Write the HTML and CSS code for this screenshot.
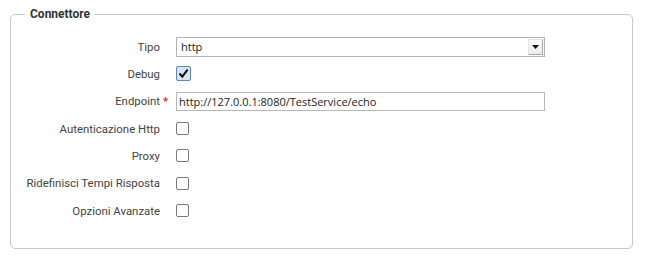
FILE: index.html
```html
<!DOCTYPE html>
<html>
<head>
<meta charset="utf-8">
<link rel="stylesheet" href="styles.css">
</head>
<body>
<fieldset class="box">
  <legend class="box-title">Connettore</legend>
  <div class="form">
    <div class="label">Tipo</div>
    <div class="field">
      <div class="select">
        <span class="select-text">http</span>
        <span class="select-btn"><svg width="7" height="4" viewBox="0 0 7 4"><path d="M0 0H7L3.5 4Z" fill="#111"/></svg></span>
      </div>
    </div>

    <div class="label">Debug</div>
    <div class="field">
      <span class="check checked"><svg width="11" height="11" viewBox="0 0 11 11"><path d="M1.5 5.5L4.3 8.6L9.6 1.6" fill="none" stroke="#111" stroke-width="2"/></svg></span>
    </div>

    <div class="label">Endpoint<span class="req">*</span></div>
    <div class="field">
      <div class="input">http://127.0.0.1:8080/TestService/echo</div>
    </div>

    <div class="label">Autenticazione Http</div>
    <div class="field"><span class="check"></span></div>

    <div class="label">Proxy</div>
    <div class="field"><span class="check"></span></div>

    <div class="label">Ridefinisci Tempi Risposta</div>
    <div class="field"><span class="check"></span></div>

    <div class="label">Opzioni Avanzate</div>
    <div class="field"><span class="check"></span></div>
  </div>
</fieldset>
</body>
</html>
```
FILE: styles.css
```css
html, body {
  margin: 0;
  background: #fff;
}
body {
  padding: 7px 12px 0 10px;
  font-family: Roboto, "Liberation Sans", sans-serif;
  font-size: 11.4px;
  color: #444;
}
.box {
  margin: 0;
  padding: 0 0 24px 0;
  border: 1px solid #c8c8c8;
  border-radius: 5px;
  min-width: 0;
}
.box-title {
  margin-left: 14px;
  padding: 0 5px;
  font-weight: bold;
  font-size: 12px;
  line-height: 14px;
  color: #333;
}
.form {
  margin-top: 12px;
  display: grid;
  grid-template-columns: 149px 369px;
  grid-auto-rows: 27.33px;
  column-gap: 16px;
  align-items: center;
}
.label {
  text-align: right;
  position: relative;
  white-space: nowrap;
}
.req {
  position: absolute;
  left: 100%;
  margin-left: 3px;
  color: #e02020;
  font-weight: bold;
}
.field {
  display: flex;
  align-items: center;
}
.select {
  box-sizing: border-box;
  width: 369px;
  height: 20px;
  border: 1px solid #b4b4b4;
  display: flex;
  align-items: center;
  justify-content: space-between;
  font-family: "Open Sans", sans-serif;
  font-size: 11px;
  color: #222;
  background: #fff;
}
.select-text {
  padding-left: 4px;
}
.select-btn {
  box-sizing: border-box;
  width: 15px;
  height: 16px;
  margin-right: 1px;
  border: 1px solid #e4e4e4;
  border-right-color: #a8a8a8;
  border-bottom-color: #a8a8a8;
  background: linear-gradient(#fcfcfc, #ececec);
  display: flex;
  align-items: center;
  justify-content: center;
}
.input {
  box-sizing: border-box;
  width: 369px;
  height: 19px;
  border: 1px solid #b8b8b8;
  padding-left: 2px;
  display: flex;
  align-items: center;
  font-family: "Open Sans", sans-serif;
  font-size: 11px;
  color: #222;
}
.check {
  box-sizing: border-box;
  display: inline-flex;
  align-items: center;
  justify-content: center;
  width: 13px;
  height: 13px;
  border: 1px solid #7a7a7a;
  border-radius: 2px;
  background: #fff;
}
.check.checked {
  width: 15px;
  height: 15px;
  border: 1px solid #5f88b4;
  background: #d6e4f3;
  border-radius: 2px;
}
```
